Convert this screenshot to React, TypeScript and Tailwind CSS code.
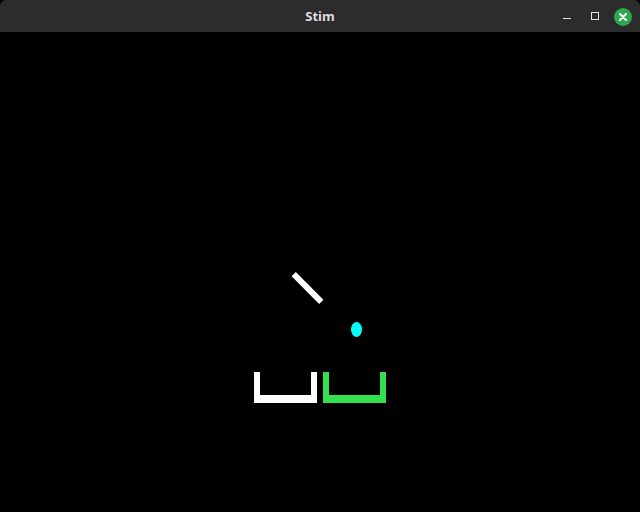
import React from "react";

export default function App() {
  return (
    <div className="w-[640px] h-[512px] flex flex-col bg-black overflow-hidden">
      <div className="h-[32px] shrink-0 bg-[#2c2c2c] rounded-t-[6px] relative flex items-center justify-center">
        <span
          className="text-[13px] font-bold text-[#dedede] mt-[2px]"
          style={{ fontFamily: '"Noto Sans", "DejaVu Sans", sans-serif' }}
        >
          Stim
        </span>
        <div className="absolute right-0 top-0 h-[32px] flex items-center">
          <div className="w-[8px] h-[1px] bg-[#e0e0e0] mt-[5px] mr-[20px]" />
          <div className="w-[8px] h-[8px] border border-[#e0e0e0] mr-[15px] mt-[-1px]" />
          <div className="w-[18px] h-[18px] rounded-full bg-[#2fa84f] mr-[8px] mt-[2px] flex items-center justify-center">
            <svg width="10" height="10" viewBox="0 0 10 10">
              <path d="M2 2 L8 8 M8 2 L2 8" stroke="white" strokeWidth="2" strokeLinecap="round" />
            </svg>
          </div>
        </div>
      </div>
      <div className="flex-1 relative bg-black">
        {/* tilted bar */}
        <div
          className="absolute bg-white w-[39px] h-[6px] left-[288px] top-[253px]"
          style={{ transform: "rotate(45deg)" }}
        />
        {/* cyan dot */}
        <div className="absolute bg-[#00ffff] rounded-[50%] left-[351px] top-[290px] w-[11px] h-[15px]" />
        {/* white cup */}
        <div className="absolute left-[254px] top-[340px] w-[63px] h-[31px] border-x-[6px] border-b-[8px] border-white" />
        {/* green cup */}
        <div className="absolute left-[323px] top-[340px] w-[63px] h-[31px] border-x-[6px] border-b-[8px] border-[#33e04d]" />
      </div>
    </div>
  );
}
